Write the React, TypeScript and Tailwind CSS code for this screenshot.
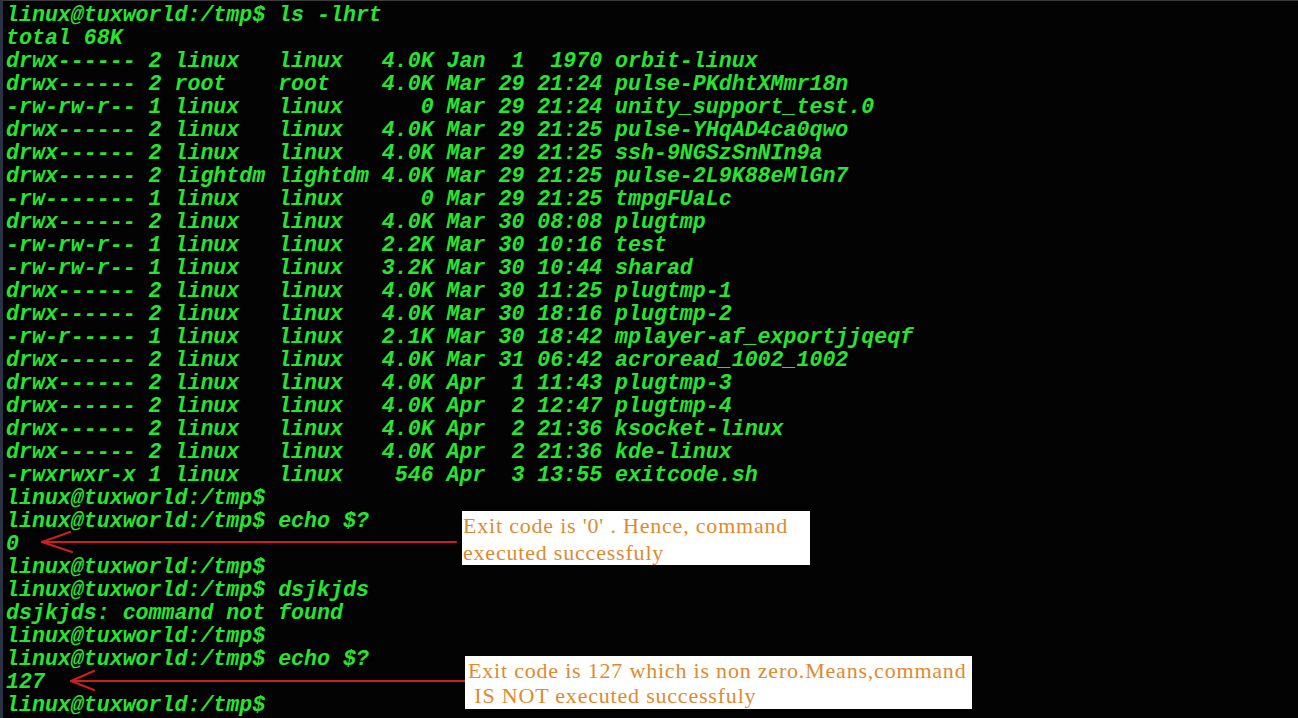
import React from "react";

const lines = [
  "linux@tuxworld:/tmp$ ls -lhrt",
  "total 68K",
  "drwx------ 2 linux   linux   4.0K Jan  1  1970 orbit-linux",
  "drwx------ 2 root    root    4.0K Mar 29 21:24 pulse-PKdhtXMmr18n",
  "-rw-rw-r-- 1 linux   linux      0 Mar 29 21:24 unity_support_test.0",
  "drwx------ 2 linux   linux   4.0K Mar 29 21:25 pulse-YHqAD4ca0qwo",
  "drwx------ 2 linux   linux   4.0K Mar 29 21:25 ssh-9NGSzSnNIn9a",
  "drwx------ 2 lightdm lightdm 4.0K Mar 29 21:25 pulse-2L9K88eMlGn7",
  "-rw------- 1 linux   linux      0 Mar 29 21:25 tmpgFUaLc",
  "drwx------ 2 linux   linux   4.0K Mar 30 08:08 plugtmp",
  "-rw-rw-r-- 1 linux   linux   2.2K Mar 30 10:16 test",
  "-rw-rw-r-- 1 linux   linux   3.2K Mar 30 10:44 sharad",
  "drwx------ 2 linux   linux   4.0K Mar 30 11:25 plugtmp-1",
  "drwx------ 2 linux   linux   4.0K Mar 30 18:16 plugtmp-2",
  "-rw-r----- 1 linux   linux   2.1K Mar 30 18:42 mplayer-af_exportjjqeqf",
  "drwx------ 2 linux   linux   4.0K Mar 31 06:42 acroread_1002_1002",
  "drwx------ 2 linux   linux   4.0K Apr  1 11:43 plugtmp-3",
  "drwx------ 2 linux   linux   4.0K Apr  2 12:47 plugtmp-4",
  "drwx------ 2 linux   linux   4.0K Apr  2 21:36 ksocket-linux",
  "drwx------ 2 linux   linux   4.0K Apr  2 21:36 kde-linux",
  "-rwxrwxr-x 1 linux   linux    546 Apr  3 13:55 exitcode.sh",
  "linux@tuxworld:/tmp$",
  "linux@tuxworld:/tmp$ echo $?",
  "0",
  "linux@tuxworld:/tmp$",
  "linux@tuxworld:/tmp$ dsjkjds",
  "dsjkjds: command not found",
  "linux@tuxworld:/tmp$",
  "linux@tuxworld:/tmp$ echo $?",
  "127",
  "linux@tuxworld:/tmp$",
];

function Note({ className, children }: { className: string; children: React.ReactNode }) {
  return (
    <div
      className={`absolute bg-white text-[#df8a2f] font-['Liberation_Serif',serif] text-[22px] tracking-[0.8px] whitespace-pre ${className}`}
    >
      {children}
    </div>
  );
}

export default function App() {
  return (
    <div className="relative w-[1298px] h-[718px] overflow-hidden bg-[#030303] border-t border-[#3c3c3c] border-l-[3px] border-l-[#2b3244]">
      <pre className="pl-[3px] pt-[3px] text-[#28e332] font-['Liberation_Mono',monospace] font-bold italic text-[21.6px] leading-[23px]">
        {lines.map((l, i) => (
          <div key={i} className="h-[23px]">
            {l}
          </div>
        ))}
      </pre>

      <svg className="absolute left-[-3px] top-[-1px]" width="1298" height="718">
        <g stroke="#cc1f1f" strokeWidth="2.2" fill="none" strokeLinecap="round">
          <line x1="42" y1="542" x2="456" y2="542" />
          <line x1="42" y1="542" x2="70" y2="532" />
          <line x1="42" y1="542" x2="72" y2="552" />
          <line x1="71" y1="681" x2="465" y2="681" />
          <line x1="71" y1="681" x2="94" y2="671" />
          <line x1="71" y1="681" x2="94" y2="690" />
        </g>
      </svg>

      <Note className="left-[459px] top-[510px] w-[348px] h-[54px] pl-[1px] pt-[1px] leading-[27px]">
        {"Exit code is '0' . Hence, command\nexecuted successfuly"}
      </Note>
      <Note className="left-[462px] top-[655px] w-[507px] h-[53px] pl-[3px] pt-[2px] leading-[25px]">
        {"Exit code is 127 which is non zero.Means,command\n IS NOT executed successfuly"}
      </Note>
    </div>
  );
}
